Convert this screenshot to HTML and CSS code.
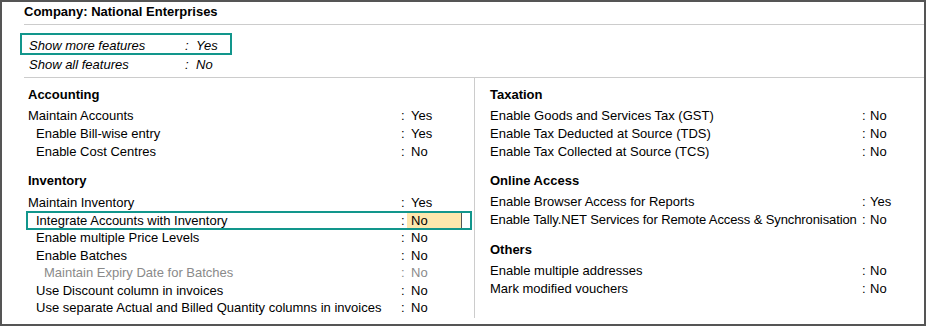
FILE: index.html
```html
<!DOCTYPE html>
<html lang="en">
<head>
  <meta charset="UTF-8">
  <title>Company Features</title>
  <link rel="stylesheet" href="styles.css">
</head>
<body>
  <div class="screen">
    <div class="head">
      <div class="company">Company: National Enterprises</div>
      <div class="features">
        <div class="feat current"><span>Show more features</span><span>:</span><span>Yes</span></div>
        <div class="feat"><span>Show all features</span><span>:</span><span>No</span></div>
      </div>
    </div>

    <div class="cols">
      <div class="col col-left">
        <div class="section">
          <div class="section-title">Accounting</div>
          <div class="row"><span class="lbl">Maintain Accounts</span><span class="sep">:</span><span class="val">Yes</span></div>
          <div class="row sub"><span class="lbl">Enable Bill-wise entry</span><span class="sep">:</span><span class="val">Yes</span></div>
          <div class="row sub"><span class="lbl">Enable Cost Centres</span><span class="sep">:</span><span class="val">No</span></div>
        </div>
        <div class="section compact">
          <div class="section-title">Inventory</div>
          <div class="row"><span class="lbl">Maintain Inventory</span><span class="sep">:</span><span class="val">Yes</span></div>
          <div class="row sub current"><span class="lbl">Integrate Accounts with Inventory</span><span class="sep">:</span><span class="val input">No</span></div>
          <div class="row sub"><span class="lbl">Enable multiple Price Levels</span><span class="sep">:</span><span class="val">No</span></div>
          <div class="row sub"><span class="lbl">Enable Batches</span><span class="sep">:</span><span class="val">No</span></div>
          <div class="row sub2 muted"><span class="lbl">Maintain Expiry Date for Batches</span><span class="sep">:</span><span class="val">No</span></div>
          <div class="row sub"><span class="lbl">Use Discount column in invoices</span><span class="sep">:</span><span class="val">No</span></div>
          <div class="row sub"><span class="lbl">Use separate Actual and Billed Quantity columns in invoices</span><span class="sep">:</span><span class="val">No</span></div>
        </div>
      </div>

      <div class="col col-right">
        <div class="section">
          <div class="section-title">Taxation</div>
          <div class="row"><span class="lbl">Enable Goods and Services Tax (GST)</span><span class="sep">:</span><span class="val">No</span></div>
          <div class="row"><span class="lbl">Enable Tax Deducted at Source (TDS)</span><span class="sep">:</span><span class="val">No</span></div>
          <div class="row"><span class="lbl">Enable Tax Collected at Source (TCS)</span><span class="sep">:</span><span class="val">No</span></div>
        </div>
        <div class="section">
          <div class="section-title">Online Access</div>
          <div class="row"><span class="lbl">Enable Browser Access for Reports</span><span class="sep">:</span><span class="val">Yes</span></div>
          <div class="row"><span class="lbl tight">Enable Tally.NET Services for Remote Access &amp; Synchronisation</span><span class="sep">:</span><span class="val">No</span></div>
        </div>
        <div class="section others">
          <div class="section-title">Others</div>
          <div class="row"><span class="lbl">Enable multiple addresses</span><span class="sep">:</span><span class="val">No</span></div>
          <div class="row"><span class="lbl">Mark modified vouchers</span><span class="sep">:</span><span class="val">No</span></div>
        </div>
      </div>
    </div>
  </div>
</body>
</html>
```

FILE: styles.css
```css
body {
  margin: 0;
  font-family: "Liberation Sans", Arial, sans-serif;
  font-size: 13px;
  color: #000;
  background: #fff;
}
.screen {
  width: 926px;
  height: 326px;
  box-sizing: border-box;
  border: 2px solid #555;
  background: #fff;
}
.head {
  margin-left: 22px;
}
.company {
  font-weight: bold;
  line-height: 20px;
  padding-bottom: 2px;
  border-bottom: 1px solid #ccc;
}
.features {
  padding: 9px 0 3px;
  border-bottom: 1px solid #ccc;
}
.feat {
  display: grid;
  grid-template-columns: 156px 11px auto;
  font-style: italic;
  line-height: 18px;
  padding-left: 5px;
}
.feat.current {
  width: 212px;
  box-sizing: border-box;
  margin: -1px 0 1px -4px;
  padding: 4px 0 0 7px;
  line-height: 14px;
  border: 2px solid #12968c;
}
.cols {
  display: flex;
  height: 240px;
}
.col {
  padding-top: 8px;
  box-sizing: border-box;
}
.col-left {
  width: 451px;
  margin-left: 22px;
  padding-left: 4px;
  border-right: 1px solid #ccc;
}
.col-right {
  flex: 1;
  padding-left: 15px;
}
.section + .section {
  margin-top: 11px;
}
.section.others {
  margin-top: 12px;
}
.section-title {
  font-weight: bold;
  line-height: 18px;
  margin-bottom: 3px;
}
.row {
  display: grid;
  line-height: 18px;
  white-space: nowrap;
}
.section.compact .section-title {
  margin-bottom: 4px;
}
.section.compact .row {
  line-height: 17.5px;
}
.col-left .row {
  grid-template-columns: 373px 10px 1fr;
  margin-right: 4px;
}
.col-right .row {
  grid-template-columns: 372px 8px 1fr;
}
.row .lbl {
  box-sizing: border-box;
}
.row .lbl.tight {
  letter-spacing: -0.1px;
}
.row.sub .lbl {
  padding-left: 8px;
}
.row.sub2 .lbl {
  padding-left: 16px;
}
.row.muted {
  color: #8a8a8a;
}
.row.current {
  position: relative;
}
.row.current::after {
  content: "";
  position: absolute;
  left: -2px;
  right: -2px;
  top: -1px;
  bottom: -1px;
  border: 2px solid #12968c;
}
.val.input {
  width: 55px;
  box-sizing: border-box;
  margin-left: -4px;
  padding-left: 4px;
  background: #fde7ad;
  border-right: 1px solid #555;
}
```
